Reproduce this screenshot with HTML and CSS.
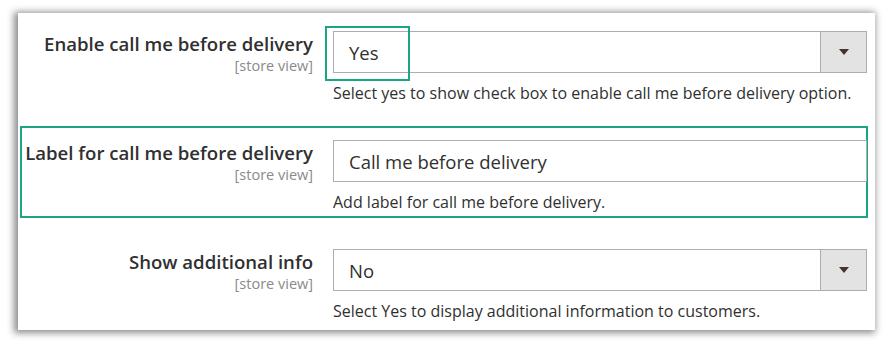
FILE: index.html
```html
<!DOCTYPE html>
<html lang="en">
<head>
<meta charset="utf-8">
<title>Call me before delivery settings</title>
<link rel="stylesheet" href="styles.css">
</head>
<body>
<div class="panel">
  <div class="row">
    <div class="label">
      <span class="label-text">Enable call me before delivery</span>
      <span class="scope">[store view]</span>
    </div>
    <div class="control">
      <div class="field select">
        <span class="value">Yes</span>
        <span class="btn"><span class="arrow"></span></span>
        <span class="mark"></span>
      </div>
      <div class="note">Select yes to show check box to enable call me before delivery option.</div>
    </div>
  </div>
  <div class="row highlighted">
    <div class="label">
      <span class="label-text">Label for call me before delivery</span>
      <span class="scope">[store view]</span>
    </div>
    <div class="control">
      <div class="field">
        <span class="value">Call me before delivery</span>
      </div>
      <div class="note">Add label for call me before delivery.</div>
    </div>
  </div>
  <div class="row">
    <div class="label">
      <span class="label-text">Show additional info</span>
      <span class="scope">[store view]</span>
    </div>
    <div class="control">
      <div class="field select">
        <span class="value">No</span>
        <span class="btn"><span class="arrow"></span></span>
      </div>
      <div class="note">Select Yes to display additional information to customers.</div>
    </div>
  </div>
</div>
</body>
</html>
```
FILE: styles.css
```css
* { box-sizing: border-box; }
html, body { margin: 0; padding: 0; background: #fff; }
body {
  font-family: "Open Sans", "Noto Sans", sans-serif;
  color: #303030;
  width: 894px;
  height: 344px;
  overflow: hidden;
}
.panel {
  margin: 13px 0 0 18px;
  width: 857px;
  height: 317px;
  background: #fff;
  box-shadow: -2px 1px 7px 2px rgba(0,0,0,0.45);
  padding-top: 4px;
  display: flex;
  flex-direction: column;
  gap: 17px;
}
.row {
  margin-left: 2px;
  width: 848px;
  border: 2px solid transparent;
  padding: 12px 0 4px 0;
  display: grid;
  grid-template-columns: 291px 534px;
  column-gap: 20px;
}
.row.highlighted { border-color: #1ba683; }
.label {
  display: flex;
  flex-direction: column;
  align-items: flex-end;
  text-align: right;
}
.label-text {
  font-size: 18.6px;
  font-weight: 600;
  line-height: 25px;
  white-space: nowrap;
}
.scope {
  font-size: 14.5px;
  line-height: 19px;
  color: #8a8a8a;
}
.control { position: relative; }
.field {
  position: relative;
  height: 42px;
  border: 1px solid #adadad;
  background: #fff;
  display: flex;
  align-items: center;
}
.value {
  padding-left: 15px;
  font-size: 18.5px;
  flex: 1;
}
.btn {
  width: 46px;
  align-self: stretch;
  background: #e3e3e3;
  border-left: 1px solid #adadad;
  display: flex;
  align-items: center;
  justify-content: center;
}
.arrow {
  width: 0;
  height: 0;
  border-left: 5px solid transparent;
  border-right: 5px solid transparent;
  border-top: 6px solid #41362f;
}
.note {
  margin-top: 10px;
  font-size: 16px;
  line-height: 20px;
  white-space: nowrap;
}
.mark {
  position: absolute;
  left: -9px;
  top: -6px;
  width: 85px;
  height: 55px;
  border: 2px solid #1ba683;
}
```
